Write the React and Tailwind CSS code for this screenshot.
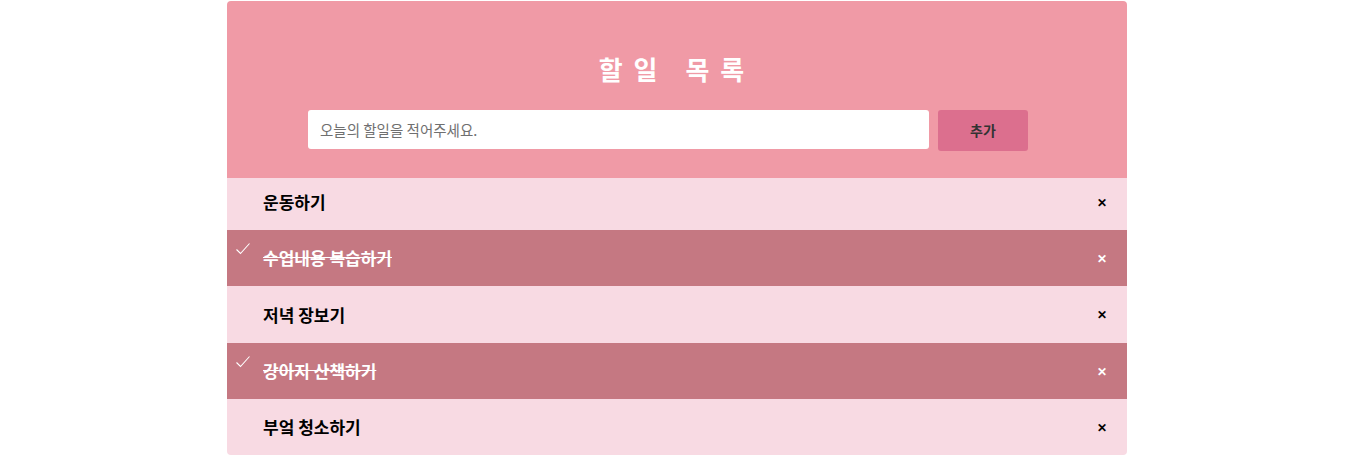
import React from 'react';

const initialTodos = [
  { id: 1, text: '운동하기', done: false },
  { id: 2, text: '수업내용 복습하기', done: true },
  { id: 3, text: '저녁 장보기', done: false },
  { id: 4, text: '강아지 산책하기', done: true },
  { id: 5, text: '부엌 청소하기', done: false },
];

function TodoItem({ todo, first, onToggle, onRemove }) {
  const base = todo.done ? 'bg-[#c57882] text-white' : 'bg-[#f8dae3] text-black';
  const height = first ? 'h-[52px] pb-[4px]' : 'h-[56.25px]';
  return (
    <li
      onClick={() => onToggle(todo.id)}
      className={`relative flex items-center pl-[36px] pr-[20px] cursor-pointer ${base} ${height}`}
    >
      {todo.done && (
        <svg className="absolute left-[8px] top-[12px]" width="16" height="14" viewBox="0 0 16 14" fill="none">
          <path d="M1.5 7.5 L5.5 11.5 L14.5 1.5" stroke="white" strokeWidth="1.1" />
        </svg>
      )}
      <span className={`flex-1 text-[17px] font-bold ${todo.done ? 'line-through' : ''}`}>{todo.text}</span>
      <button
        onClick={(e) => {
          e.stopPropagation();
          onRemove(todo.id);
        }}
        className={`text-[12px] font-bold leading-none ${todo.done ? 'text-white' : 'text-black'}`}
      >
        ✕
      </button>
    </li>
  );
}

export default function App() {
  const [todos, setTodos] = React.useState(initialTodos);
  const [input, setInput] = React.useState('');

  const addTodo = () => {
    if (!input.trim()) return;
    setTodos((s) => [...s, { id: Date.now(), text: input, done: false }]);
    setInput('');
  };
  const toggle = (id) => setTodos((s) => s.map((t) => (t.id === id ? { ...t, done: !t.done } : t)));
  const remove = (id) => setTodos((s) => s.filter((t) => t.id !== id));

  return (
    <div className="w-full min-h-[464px] bg-white pt-[1px] pl-[6px] font-['Noto_Sans_CJK_KR','Noto_Sans',sans-serif]">
      <div className="w-[900px] mx-auto rounded-[4px] overflow-hidden">
        <div className="bg-[#f09aa6] h-[177px] flex flex-col items-center pt-[50px]">
          <h1 className="text-white text-[26px] font-bold tracking-[11px] leading-[36px]">할일 목록</h1>
          <div className="flex items-start gap-[9px] mt-[23px] mr-[18px]">
            <input
              value={input}
              onChange={(e) => setInput(e.target.value)}
              placeholder="오늘의 할일을 적어주세요."
              className="w-[621px] h-[39px] rounded-[3px] bg-white px-[12px] text-[14.5px] text-black placeholder:text-[#6f6f6f] outline-none"
            />
            <button
              onClick={addTodo}
              className="w-[90px] h-[41px] rounded-[3px] bg-[#dc6f8e] text-[#333] text-[14px] font-bold"
            >
              추가
            </button>
          </div>
        </div>
        <ul>
          {todos.map((t, i) => (
            <TodoItem key={t.id} todo={t} first={i === 0} onToggle={toggle} onRemove={remove} />
          ))}
        </ul>
      </div>
    </div>
  );
}
